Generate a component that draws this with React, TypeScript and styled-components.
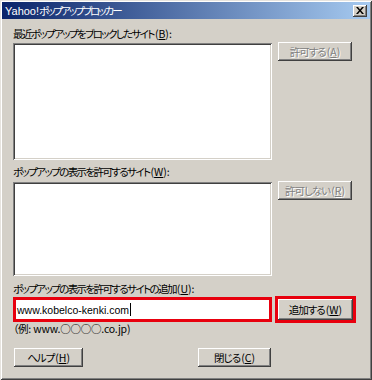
import React from "react";
import styled, { createGlobalStyle } from "styled-components";

const GlobalStyle = createGlobalStyle`
    body {
        margin: 0;
        background: #d4d0c8;
    }
`

const Window = styled.div`
    width: 372px;
    height: 380px;
    box-sizing: border-box;
    padding: 2px;
    background: #d4d0c8;
    box-shadow: inset 1px 1px #e6e3de, inset -1px -1px #404040, inset 2px 2px #fff, inset -2px -2px #808080;
    display: flex;
    flex-direction: column;
    font-family: "Noto Sans CJK JP", "Noto Sans", sans-serif;
    font-size: 10.5px;
    letter-spacing: -1.6px;
    font-feature-settings: "palt";
    color: #000;
`

const TitleBar = styled.div`
    height: 17px;
    display: flex;
    align-items: center;
    justify-content: space-between;
    padding: 0 3px 0 3px;
    background: linear-gradient(to right, #0a246a, #a6caf0);
    color: #fff;
    font-size: 10.5px;
    letter-spacing: -2px;
    line-height: 17px;
`

const Brand = styled.span`
    font-family: "Liberation Sans", Arial, sans-serif;
    font-size: 11px;
    letter-spacing: 0;
`

const Key = styled.span`
    letter-spacing: 0;
    margin-left: 1px;
`

const CloseBox = styled.div`
    width: 14px;
    height: 12px;
    box-sizing: border-box;
    background: #d4d0c8;
    box-shadow: inset -1px -1px #404040, inset 1px 1px #fff, inset -2px -2px #808080;
    display: flex;
    align-items: center;
    justify-content: center;
`

const Body = styled.div`
    display: flex;
    flex-direction: column;
    padding: 0 0 0 11px;
`

const Label = styled.div<{ $top: number }>`
    margin-top: ${p => p.$top}px;
    height: 12px;
    line-height: 12px;
    white-space: nowrap;
`

const Row = styled.div<{ $top: number, $gap: number }>`
    margin-top: ${p => p.$top}px;
    display: flex;
    align-items: flex-start;
    gap: ${p => p.$gap}px;
`

const ListBox = styled.div<{ $h: number }>`
    margin-top: 1px;
    width: 259px;
    height: ${p => p.$h}px;
    box-sizing: border-box;
    background: #fff;
    box-shadow: inset 1px 1px #808080, inset -1px -1px #fff, inset 2px 2px #404040, inset -2px -2px #d4d0c8;
`

const Button = styled.div<{ $w: number, $h?: number, $disabled?: boolean }>`
    width: ${p => p.$w}px;
    height: ${p => p.$h ?? 19}px;
    box-sizing: border-box;
    background: #d4d0c8;
    box-shadow: inset -1px -1px #404040, inset 1px 1px #fff, inset -2px -2px #808080;
    display: flex;
    align-items: center;
    justify-content: center;
    white-space: nowrap;
    line-height: 12px;
    letter-spacing: -1px;
    color: ${p => p.$disabled ? "#808080" : "#000"};
    text-shadow: ${p => p.$disabled ? "1px 1px #fff" : "none"};
`

const RedFrame = styled.div<{ $w: number, $h: number, $top: number }>`
    margin-top: ${p => p.$top}px;
    width: ${p => p.$w}px;
    height: ${p => p.$h}px;
    box-sizing: border-box;
    border: 3px solid #e8000e;
    display: flex;
    align-items: center;
`

const InputField = styled.div`
    flex: 1;
    align-self: stretch;
    background: #fff;
    display: flex;
    align-items: center;
    padding-left: 1px;
    font-family: "Liberation Sans", Arial, sans-serif;
    font-size: 10.5px;
    letter-spacing: 0;
`

const Caret = styled.span`
    display: inline-block;
    width: 1px;
    height: 13px;
    margin-left: 1px;
    background: #000;
`

const Example = styled.div`
    height: 11px;
    line-height: 11px;
    white-space: nowrap;
    letter-spacing: -0.2px;
`

const BottomRow = styled.div`
    margin-top: 14px;
    padding-left: 1px;
    display: flex;
    gap: 115px;
`

function App() {
    return (
        <Window>
            <GlobalStyle />
            <TitleBar>
                <span><Brand>Yahoo!</Brand>ポップアップブロッカー</span>
                <CloseBox>
                    <svg width="8" height="7" viewBox="0 0 8 7">
                        <path d="M0 0h2l2 2.5L6 0h2L5 3.5 8 7H6L4 4.5 2 7H0l3-3.5z" fill="#000" />
                    </svg>
                </CloseBox>
            </TitleBar>
            <Body>
                <Label $top={9}>最近ポップアップをブロックしたサイト<Key>(<u>B</u>):</Key></Label>
                <Row $top={2} $gap={6}>
                    <ListBox $h={117} />
                    <Button $w={74} $disabled>許可する<Key>(<u>A</u>)</Key></Button>
                </Row>
                <Label $top={6}>ポップアップの表示を許可するサイト<Key>(<u>W</u>):</Key></Label>
                <Row $top={3} $gap={6}>
                    <ListBox $h={94} />
                    <Button $w={74} $disabled>許可しない<Key>(<u>R</u>)</Key></Button>
                </Row>
                <Label $top={7}>ポップアップの表示を許可するサイトの追加<Key>(<u>U</u>):</Key></Label>
                <Row $top={1} $gap={3}>
                    <RedFrame $w={259} $h={25} $top={1}>
                        <InputField>www.kobelco-kenki.com<Caret /></InputField>
                    </RedFrame>
                    <RedFrame $w={81} $h={27} $top={0}>
                        <Button $w={75} $h={21}>追加する<Key>(<u>W</u>)</Key></Button>
                    </RedFrame>
                </Row>
                <Example>（例: www.○○○○.co.jp)</Example>
                <BottomRow>
                    <Button $w={69}>ヘルプ<Key>(<u>H</u>)</Key></Button>
                    <Button $w={73}>閉じる<Key>(<u>C</u>)</Key></Button>
                </BottomRow>
            </Body>
        </Window>
    )
}

export default App
